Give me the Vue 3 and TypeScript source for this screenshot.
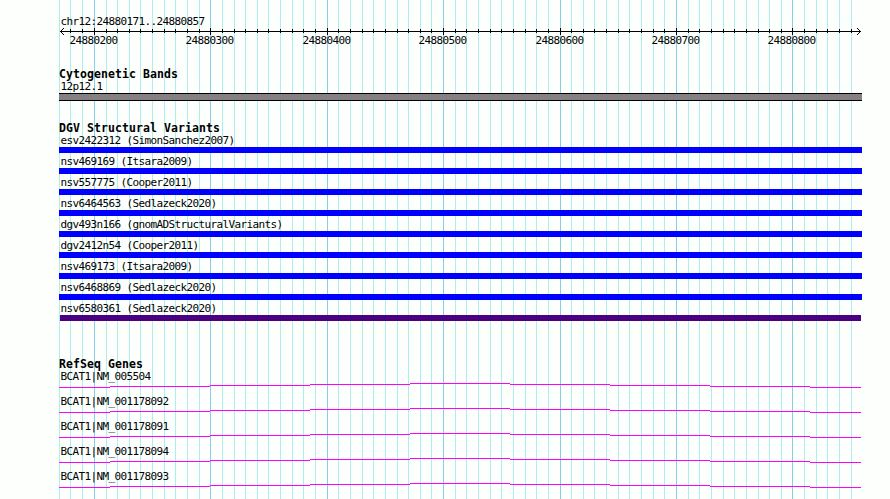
<script setup lang="ts">
interface Feature {
  label: string
  kind: 'gain' | 'complex'
}

// Pixel column of every 10 bp division in the view
const divisions: number[] = [
  59, 70, 82, 94, 106, 117, 129, 140, 152, 164, 175, 187, 199, 210, 222, 234, 245, 257, 268, 280, 292, 303, 315,
  327, 338, 350, 362, 373, 385, 397, 408, 420, 431, 443, 455, 466, 478, 490, 501, 513, 525, 536, 548, 560, 571, 583,
  594, 606, 618, 629, 641, 653, 664, 676, 688, 699, 711, 723, 734, 746, 758, 769, 781, 792, 804, 816, 827, 839, 851,
]
const isMajor = (i: number): boolean => i % 10 === 3
const majors = divisions
  .filter((_, i) => isMajor(i))
  .map((x, i) => ({ x, label: String(24880200 + i * 100) }))

const variants: Feature[] = [
  { label: 'esv2422312 (SimonSanchez2007)', kind: 'gain' },
  { label: 'nsv469169 (Itsara2009)', kind: 'gain' },
  { label: 'nsv557775 (Cooper2011)', kind: 'gain' },
  { label: 'nsv6464563 (Sedlazeck2020)', kind: 'gain' },
  { label: 'dgv493n166 (gnomADStructuralVariants)', kind: 'gain' },
  { label: 'dgv2412n54 (Cooper2011)', kind: 'gain' },
  { label: 'nsv469173 (Itsara2009)', kind: 'gain' },
  { label: 'nsv6468869 (Sedlazeck2020)', kind: 'gain' },
  { label: 'nsv6580361 (Sedlazeck2020)', kind: 'complex' },
]

const genes: string[] = [
  'BCAT1|NM_005504',
  'BCAT1|NM_001178092',
  'BCAT1|NM_001178091',
  'BCAT1|NM_001178094',
  'BCAT1|NM_001178093',
]

// Stepped intron line: x start, width, y
const steps: [number, number, number][] = [
  [0, 51, 4], [51, 100, 3], [151, 100, 2], [251, 100, 1], [351, 100, 0],
  [451, 100, 1], [551, 100, 2], [651, 100, 3], [751, 51, 4],
]
</script>

<template>
  <main class="browser">
    <svg class="grid" width="890" height="499" aria-hidden="true">
      <rect
        v-for="(x, i) in divisions"
        :key="x"
        :x="x"
        y="0"
        width="1"
        height="499"
        :class="isMajor(i) ? 'major' : 'minor'"
      />
    </svg>

    <div class="content">
      <header class="ruler">
        <div class="label">chr12:24880171..24880857</div>
        <svg class="scale" width="803" height="31" viewBox="59 26 803 31">
          <rect x="60" y="31" width="801" height="1" />
          <template v-for="(x, i) in divisions" :key="x">
            <rect v-if="i > 0" :x="x" :y="isMajor(i) ? 28 : 29" width="1" :height="isMajor(i) ? 7 : 4" />
          </template>
          <path d="M61 30h1v1h-1zM62 29h1v1h-1zM63 28h1v1h-1zM61 32h1v1h-1zM62 33h1v1h-1zM63 34h1v1h-1z" />
          <path d="M859 30h1v1h-1zM858 29h1v1h-1zM857 28h1v1h-1zM859 32h1v1h-1zM858 33h1v1h-1zM857 34h1v1h-1z" />
          <text v-for="m in majors" :key="m.x" :x="m.x - 24.4" y="44">{{ m.label }}</text>
        </svg>
      </header>

      <section class="track cyto">
        <h2>Cytogenetic Bands</h2>
        <div class="label">12p12.1</div>
        <div class="band"></div>
      </section>

      <section class="track variants">
        <h2>DGV Structural Variants</h2>
        <div v-for="v in variants" :key="v.label" class="variant">
          <div class="label">{{ v.label }}</div>
          <div class="bar" :class="v.kind"></div>
        </div>
      </section>

      <section class="track genes">
        <h2>RefSeq Genes</h2>
        <div v-for="g in genes" :key="g" class="gene">
          <div class="label">{{ g }}</div>
          <svg class="intron" width="803" height="5">
            <rect v-for="s in steps" :key="s[0]" :x="s[0]" :y="s[2]" :width="s[1]" height="1" />
          </svg>
        </div>
      </section>
    </div>
  </main>
</template>

<style>
body {
  background: #fdfffc;
  overflow: hidden;
}
</style>

<style scoped>
.browser {
  position: relative;
  width: 890px;
  height: 499px;
  overflow: hidden;
  background: #fdfffc;
  color: #000;
  font-family: 'DejaVu Sans Mono', 'Liberation Mono', monospace;
}
.grid {
  position: absolute;
  inset: 0;
  shape-rendering: crispEdges;
}
.minor {
  fill: #afeeee;
}
.major {
  fill: #87ceeb;
}
.content {
  position: relative;
  width: 803px;
  padding: 15px 0 0 59px;
}
.label {
  height: 12px;
  padding-left: 1.5px;
  font-size: 11px;
  line-height: 13px;
  letter-spacing: -0.622px;
  white-space: pre;
}
h2 {
  height: 12px;
  margin: 0;
  font-size: 11.5px;
  font-weight: 700;
  line-height: 13px;
  letter-spacing: 0.077px;
  white-space: pre;
}
.ruler {
  height: 53px;
}
.scale {
  display: block;
  margin-top: -1px;
  shape-rendering: crispEdges;
}
.scale text {
  font-size: 11px;
  letter-spacing: -0.622px;
}
.cyto {
  height: 54px;
}
.band {
  height: 6px;
  margin-top: 1px;
  border-top: 1px solid #000;
  border-bottom: 1px solid #000;
  background: #848084;
}
.variants {
  height: 236px;
}
.variant {
  height: 21px;
}
.bar {
  height: 6px;
  margin-top: 1px;
  background: #0000ff;
}
.bar.complex {
  margin-right: 1px;
  margin-left: 1px;
  background: #4b0082;
}
.gene {
  height: 25px;
}
.intron {
  display: block;
  margin-top: 1px;
  fill: #ff00ff;
  shape-rendering: crispEdges;
}
</style>
